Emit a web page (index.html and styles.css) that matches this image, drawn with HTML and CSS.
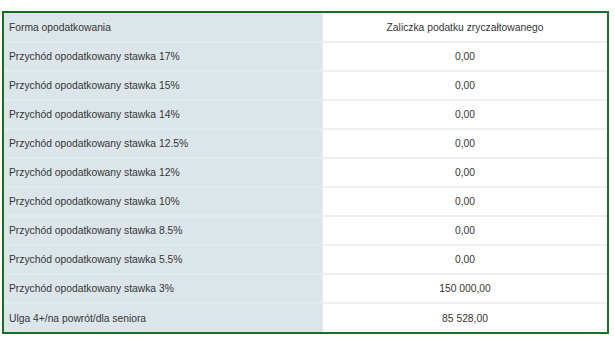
FILE: index.html
```html
<!DOCTYPE html>
<html lang="pl">
<head>
<meta charset="utf-8">
<link rel="stylesheet" href="styles.css">
</head>
<body>
<div class="frame">
  <table class="tax">
    <tbody>
      <tr><td class="label">Forma opodatkowania</td><td class="value">Zaliczka podatku zryczałtowanego</td></tr>
      <tr><td class="label">Przychód opodatkowany stawka 17%</td><td class="value">0,00</td></tr>
      <tr><td class="label">Przychód opodatkowany stawka 15%</td><td class="value">0,00</td></tr>
      <tr><td class="label">Przychód opodatkowany stawka 14%</td><td class="value">0,00</td></tr>
      <tr><td class="label">Przychód opodatkowany stawka 12.5%</td><td class="value">0,00</td></tr>
      <tr><td class="label">Przychód opodatkowany stawka 12%</td><td class="value">0,00</td></tr>
      <tr><td class="label">Przychód opodatkowany stawka 10%</td><td class="value">0,00</td></tr>
      <tr><td class="label">Przychód opodatkowany stawka 8.5%</td><td class="value">0,00</td></tr>
      <tr><td class="label">Przychód opodatkowany stawka 5.5%</td><td class="value">0,00</td></tr>
      <tr><td class="label">Przychód opodatkowany stawka 3%</td><td class="value">150 000,00</td></tr>
      <tr><td class="label">Ulga 4+/na powrót/dla seniora</td><td class="value">85 528,00</td></tr>
    </tbody>
  </table>
</div>
</body>
</html>
```
FILE: styles.css
```css
html, body {
  margin: 0;
  padding: 0;
  background: #ffffff;
}
body {
  padding: 11px 0 0 2px;
  font-family: "Liberation Sans", Arial, sans-serif;
  font-size: 10.3px;
  color: #363636;
}
.frame {
  width: 603px;
  border: 2px solid #1b6e27;
}
.tax {
  width: 100%;
  border-collapse: collapse;
  table-layout: fixed;
}
.tax tr {
  height: 29px;
}
.tax td {
  padding: 0;
  height: 27px;
  border-bottom: 2px solid #edf0f2;
  vertical-align: middle;
  white-space: nowrap;
}
.tax tr:last-child td {
  border-bottom: none;
  height: 27px;
}
.tax .label {
  width: 314px;
  padding-left: 5px;
  background: #dce5ea;
  border-bottom-color: #e3eaee;
  box-shadow: inset -2px 0 2px -1px #e6ecef;
}
.tax .value {
  text-align: center;
  background: #ffffff;
}
```
